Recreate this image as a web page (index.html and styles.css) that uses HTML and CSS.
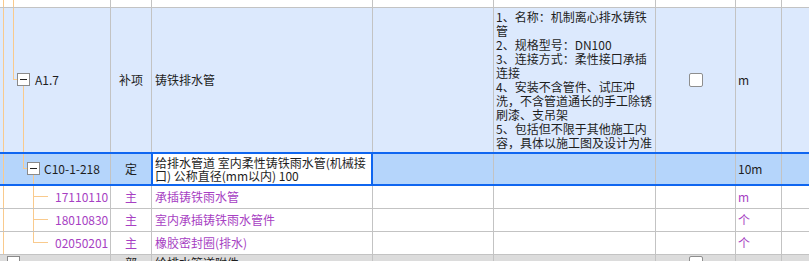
FILE: index.html
```html
<!DOCTYPE html>
<html lang="zh-CN">
<head>
    <meta charset="UTF-8">
    <title>清单定额</title>
    <link rel="stylesheet" href="styles.css">
</head>
<body>
    <div class="viewport">
        <div class="sheet">
            <!-- row above, scrolled mostly out of view -->
            <div class="row row-top">
                <div class="c code">
                    <span class="v x3"></span>
                    <span class="v x13"></span>
                </div>
                <div class="c type sub-text">主</div>
                <div class="c name sub-text">室内承插铸铁雨水管件</div>
                <div class="c"></div>
                <div class="c"></div>
                <div class="c"></div>
                <div class="c unit sub-text">个</div>
                <div class="c"></div>
            </div>

            <!-- bill item -->
            <div class="row row-item">
                <div class="c code lv1">
                    <span class="v x3"></span>
                    <span class="v x13 up"></span>
                    <span class="h" style="left: 13px; width: 4px;"></span>
                    <span class="box" style="left: 17px;"></span>
                    <span class="v x23 down"></span>
                    A1.7
                </div>
                <div class="c type">补项</div>
                <div class="c name">铸铁排水管</div>
                <div class="c"></div>
                <div class="c desc">
                    <div>1、名称：机制离心排水铸铁管<br>2、规格型号：DN100<br>3、连接方式：柔性接口承插连接<br>4、安装不含管件、试压冲洗，不含管道通长的手工除锈刷漆、支吊架<br>5、包括但不限于其他施工内容，具体以施工图及设计为准</div>
                </div>
                <div class="c center"><span class="check"></span></div>
                <div class="c unit">m</div>
                <div class="c"></div>
            </div>

            <!-- selected quota row -->
            <div class="row row-sel">
                <div class="c code lv2">
                    <span class="v x3"></span>
                    <span class="v x23 up"></span>
                    <span class="h" style="left: 23px; width: 4px;"></span>
                    <span class="box" style="left: 27px;"></span>
                    <span class="v x33 down"></span>
                    C10-1-218
                </div>
                <div class="c type">定</div>
                <div class="c name edit">给排水管道 室内柔性铸铁雨水管(机械接口) 公称直径(mm以内) 100</div>
                <div class="c"></div>
                <div class="c"></div>
                <div class="c"></div>
                <div class="c unit">10m</div>
                <div class="c"></div>
            </div>

            <!-- main materials -->
            <div class="row row-sub">
                <div class="c code lv3">
                    <span class="v x3"></span>
                    <span class="v x33"></span>
                    <span class="h" style="left: 33px; width: 15px;"></span>
                    17110110
                </div>
                <div class="c type">主</div>
                <div class="c name">承插铸铁雨水管</div>
                <div class="c"></div>
                <div class="c"></div>
                <div class="c"></div>
                <div class="c unit">m</div>
                <div class="c"></div>
            </div>

            <div class="row row-sub">
                <div class="c code lv3">
                    <span class="v x3"></span>
                    <span class="v x33"></span>
                    <span class="h" style="left: 33px; width: 15px;"></span>
                    18010830
                </div>
                <div class="c type">主</div>
                <div class="c name">室内承插铸铁雨水管件</div>
                <div class="c"></div>
                <div class="c"></div>
                <div class="c"></div>
                <div class="c unit">个</div>
                <div class="c"></div>
            </div>

            <div class="row row-sub">
                <div class="c code lv3">
                    <span class="v x3"></span>
                    <span class="v x33 up"></span>
                    <span class="h" style="left: 33px; width: 15px;"></span>
                    02050201
                </div>
                <div class="c type">主</div>
                <div class="c name">橡胶密封圈(排水)</div>
                <div class="c"></div>
                <div class="c"></div>
                <div class="c"></div>
                <div class="c unit">个</div>
                <div class="c"></div>
            </div>

            <!-- next group, cut off by the window -->
            <div class="row row-group">
                <div class="c code">
                    <span class="box" style="left: 7px;"></span>
                </div>
                <div class="c type">部</div>
                <div class="c name">给排水管道附件</div>
                <div class="c"></div>
                <div class="c"></div>
                <div class="c center"><span class="check"></span></div>
                <div class="c"></div>
                <div class="c"></div>
            </div>
        </div>
    </div>
</body>
</html>
```

FILE: styles.css
```css
html, body {
    margin: 0;
    padding: 0;
    background-color: #fff;
}

body {
    font-family: "Noto Sans CJK SC", "Noto Sans", sans-serif;
    font-size: 12px;
    color: #1e1e1e;
}

.viewport {
    width: 809px;
    height: 261px;
    overflow: hidden;
}

.sheet {
    width: 840px;
    margin-top: -15px;
}

.row {
    display: grid;
    grid-template-columns: 111px 41px 221px 121px 162px 80px 46px 58px;
    box-sizing: border-box;
}

.c {
    position: relative;
    display: flex;
    align-items: center;
    box-sizing: border-box;
    border-right: 1px solid #c3c3c3;
    border-bottom: 1px solid #c3c3c3;
    overflow: hidden;
    white-space: nowrap;
    line-height: 14px;
}

/* rows */
.row-top {
    height: 23px;
    background-color: #fff;
}

.row-top .c {
    padding-bottom: 6px;
}

.row-item {
    height: 144px;
    background-color: #dce9fd;
}

.row-item .c {
    border-bottom: none;
}

.row-sel {
    height: 34px;
    background-color: #b5d5fb;
    border-top: 2px solid #0f66f0;
    border-bottom: 2px solid #0f66f0;
}

.row-sel .c {
    border-bottom: none;
}

.row-sub {
    height: 23px;
    background-color: #fff;
    color: #a73fc3;
}

.row-group {
    height: 16px;
    background-color: #dcdcdc;
}

.sub-text {
    color: #a73fc3;
}

/* columns */
.code.lv1 { padding-left: 35px; }
.code.lv2 { padding-left: 44px; }
.code.lv3 { padding-left: 55px; }

.type,
.center {
    justify-content: center;
}

.name {
    padding-left: 3px;
}

.desc {
    white-space: normal;
    padding: 0 1px 0 2px;
}

.unit {
    padding-left: 2px;
}

.edit {
    margin-left: -1px;
    padding-left: 2px;
    background-color: #fff;
    border-left: 2px solid #0f66f0;
    border-right: 2px solid #0f66f0;
    white-space: normal;
    line-height: 13px;
}

.check {
    width: 14px;
    height: 14px;
    box-sizing: border-box;
    border: 1px solid #8e8e8e;
    border-radius: 2px;
    background-color: #fff;
}

/* tree guides */
.v {
    position: absolute;
    top: 0;
    bottom: 0;
    width: 1px;
    background-color: #f9ca8d;
}

.v.up {
    bottom: 50%;
}

.v.down {
    top: calc(50% + 6px);
}

.x3 { left: 3px; }
.x13 { left: 13px; }
.x23 { left: 23px; }
.x33 { left: 33px; }

.h {
    position: absolute;
    top: calc(50% - 1px);
    height: 1px;
    background-color: #f9ca8d;
}

.box {
    position: absolute;
    top: calc(50% - 7px);
    width: 13px;
    height: 13px;
    box-sizing: border-box;
    border: 1px solid #8a8a8a;
    background-color: #fff;
}

.box::after {
    content: "";
    position: absolute;
    left: 2px;
    top: 5px;
    width: 7px;
    height: 1px;
    background-color: #222;
}
```
